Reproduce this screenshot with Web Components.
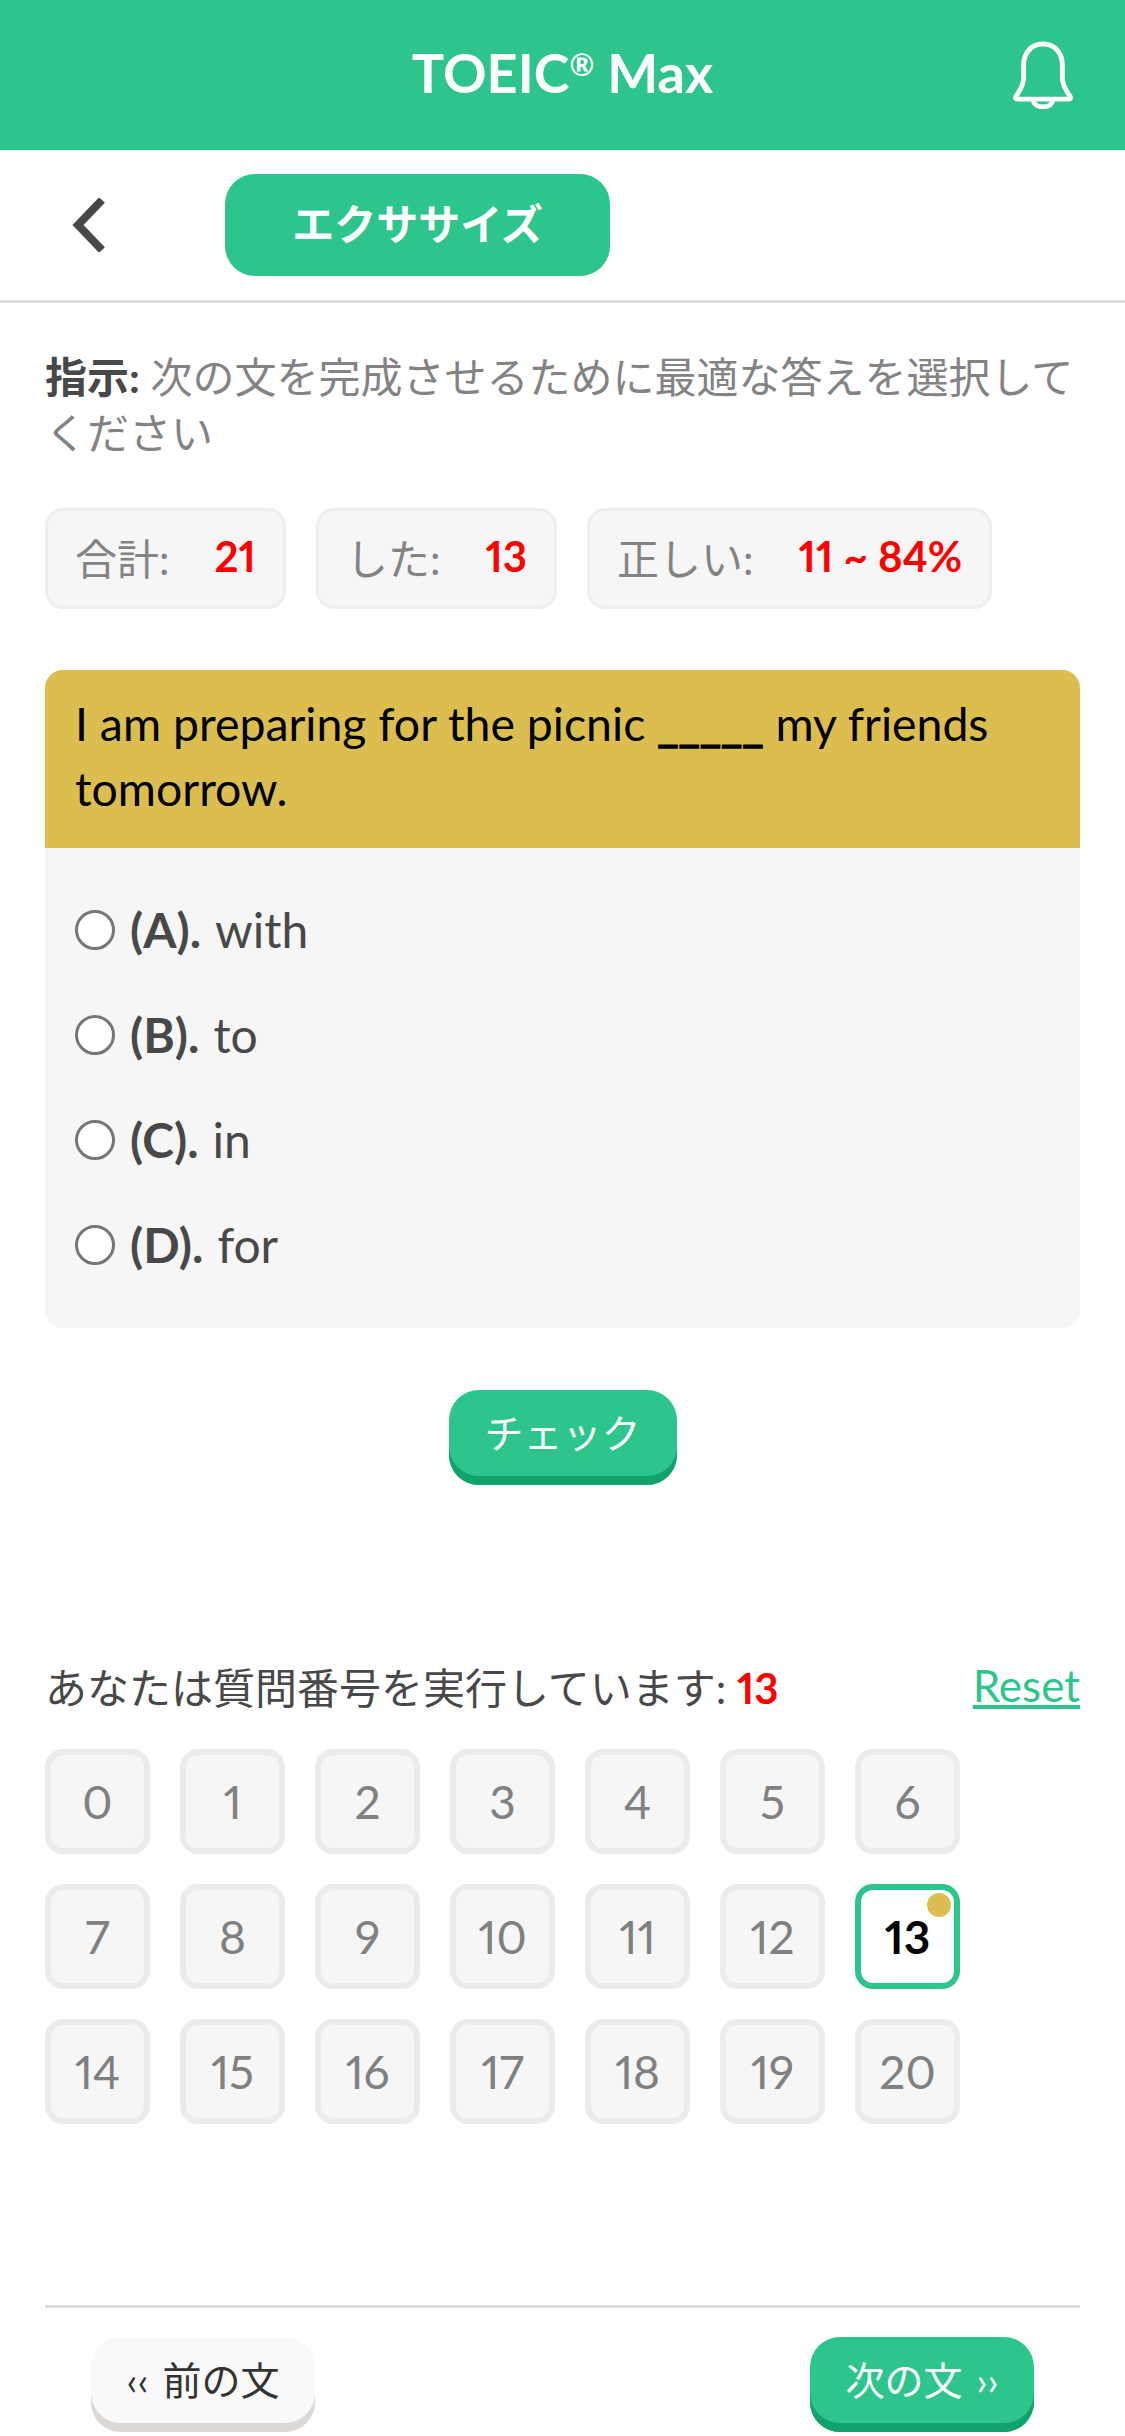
<!DOCTYPE html>
<html lang="ja">
<head>
<meta charset="utf-8">
<title>TOEIC Max</title>
<style>
  html, body {
    margin: 0;
    background: #fff;
  }
  body {
    width: 1125px;
    height: 2436px;
    overflow: hidden;
    font-family: Lato, "Noto Sans CJK JP", sans-serif;
    color: #484848;
  }
  exercise-page {
    height: 100%;
  }
</style>
</head>
<body>
<exercise-page></exercise-page>

<script>
const GREEN = "#2dc58b";
const FONT = 'Lato, "Noto Sans CJK JP", sans-serif';

class AppHeader extends HTMLElement {
  constructor() {
    super();
    this.attachShadow({ mode: "open" }).innerHTML = `
      <style>
        :host {
          display: flex;
          align-items: center;
          justify-content: center;
          position: relative;
          height: 150px;
          background: ${GREEN};
          color: #fff;
        }
        h1 {
          margin: 0 0 4px;
          font-size: 54px;
          font-weight: 700;
          line-height: 1;
        }
        sup {
          font-size: 30px;
          line-height: 0;
          vertical-align: 17px;
        }
        svg {
          position: absolute;
          left: 1013px;
          top: 41px;
          width: 60px;
          height: 68px;
        }
      </style>
      <h1>TOEIC<sup>®</sup> Max</h1>
      <svg viewBox="0 0 62 70" fill="none" stroke="#fff" stroke-width="5" stroke-linejoin="round">
        <path d="M31 3C18 3 11 13 11 25V38C11 45 8 50 3 57C2 59 3 60 5 60H57C59 60 60 59 59 57C54 50 51 45 51 38V25C51 13 44 3 31 3Z"/>
        <path d="M21 60C21 65 25 68 31 68C37 68 41 65 41 60"/>
      </svg>
    `;
  }
}

class SubNav extends HTMLElement {
  constructor() {
    super();
    this.attachShadow({ mode: "open" }).innerHTML = `
      <style>
        :host {
          display: flex;
          align-items: center;
          height: 150px;
          border-bottom: 3px solid #dcdcdc;
        }
        svg {
          width: 34px;
          height: 54px;
          margin-left: 72px;
          flex: none;
        }
        .tab {
          display: flex;
          align-items: center;
          justify-content: center;
          width: 385px;
          height: 102px;
          box-sizing: border-box;
          padding-bottom: 7px;
          margin-left: 119px;
          border-radius: 30px;
          background: ${GREEN};
          color: #fff;
          font-size: 42px;
          font-weight: 700;
        }
      </style>
      <svg viewBox="0 0 34 54" fill="none" stroke="#484848" stroke-width="8" stroke-linejoin="miter">
        <path d="M30 2L6 27L30 52"/>
      </svg>
      <div class="tab"><slot></slot></div>
    `;
  }
}

class StatPill extends HTMLElement {
  constructor() {
    super();
    this.attachShadow({ mode: "open" }).innerHTML = `
      <style>
        :host {
          display: flex;
          align-items: center;
          gap: 45px;
          height: 101px;
          box-sizing: border-box;
          padding: 0 27px 5px;
          border: 3px solid #eee;
          border-radius: 18px;
          background: #f6f6f6;
          color: #838383;
          font-size: 42px;
          font-variant-numeric: proportional-nums;
        }
        b {
          color: #f00;
        }
      </style>
      <span><slot></slot></span>
      <b>${this.getAttribute("value")}</b>
    `;
  }
}

class OptionRow extends HTMLElement {
  constructor() {
    super();
    this.attachShadow({ mode: "open" }).innerHTML = `
      <style>
        :host {
          display: flex;
          align-items: center;
          height: 105px;
          font-size: 48px;
          color: #484848;
        }
        i {
          flex: none;
          width: 40px;
          height: 40px;
          box-sizing: border-box;
          margin-right: 15px;
          border: 3px solid #767676;
          border-radius: 50%;
          background: #fff;
        }
        b {
          margin-right: 14px;
        }
      </style>
      <i></i><b>(${this.getAttribute("letter")}).</b><span><slot></slot></span>
    `;
  }
}

class QuestionCard extends HTMLElement {
  constructor() {
    super();
    this.attachShadow({ mode: "open" }).innerHTML = `
      <style>
        :host {
          display: block;
          margin: 0 45px;
          border-radius: 18px;
          overflow: hidden;
          background: #f6f6f6;
        }
        .prompt {
          height: 178px;
          box-sizing: border-box;
          padding: 21px 30px 0;
          background: #dbbe4f;
          color: #000;
          font-size: 46.4px;
          line-height: 65px;
        }
        .options {
          padding: 29px 30px 0;
          height: 480px;
          box-sizing: border-box;
        }
      </style>
      <div class="prompt"><slot name="prompt"></slot></div>
      <div class="options"><slot></slot></div>
    `;
  }
}

class PressButton extends HTMLElement {
  constructor() {
    super();
    this.attachShadow({ mode: "open" }).innerHTML = `
      <style>
        :host {
          display: inline-flex;
          align-items: center;
          justify-content: center;
          box-sizing: border-box;
          height: 95px;
          padding-bottom: 13px;
          border-radius: 30px;
          font-size: 39px;
          word-spacing: 4px;
          background: ${GREEN};
          color: #fff;
          box-shadow: inset 0 -9px 0 #12a26b;
        }
        :host([plain]) {
          background: #f9f9f9;
          color: #333;
          box-shadow: inset 0 -9px 0 #dbd8d6;
        }
      </style>
      <slot></slot>
    `;
  }
}

class NumberCell extends HTMLElement {
  constructor() {
    super();
    this.attachShadow({ mode: "open" }).innerHTML = `
      <style>
        :host {
          display: flex;
          align-items: center;
          justify-content: center;
          position: relative;
          width: 105px;
          height: 105px;
          box-sizing: border-box;
          border: 6px solid #ebebeb;
          border-radius: 18px;
          background: #f6f6f6;
          color: #808080;
          font-size: 46px;
          font-variant-numeric: proportional-nums;
        }
        :host([current]) {
          border-color: ${GREEN};
          background: #fff;
          color: #000;
          font-weight: 700;
        }
        :host([current])::after {
          content: "";
          position: absolute;
          top: 3px;
          right: 3px;
          width: 24px;
          height: 24px;
          border-radius: 50%;
          background: #dbbe4f;
        }
      </style>
      <slot></slot>
    `;
  }
}

class NumberGrid extends HTMLElement {
  constructor() {
    super();
    const root = this.attachShadow({ mode: "open" });
    root.innerHTML = `
      <style>
        :host {
          display: grid;
          grid-template-columns: repeat(7, 105px);
          column-gap: 30px;
          row-gap: 30px;
          margin: 0 45px;
        }
      </style>
    `;
    const current = Number(this.getAttribute("current"));
    for (let i = 0; i < Number(this.getAttribute("count")); i++) {
      const cell = document.createElement("number-cell");
      cell.textContent = i;
      if (i === current) cell.setAttribute("current", "");
      root.appendChild(cell);
    }
  }
}

class ExercisePage extends HTMLElement {
  constructor() {
    super();
    this.attachShadow({ mode: "open" }).innerHTML = `
      <style>
        :host {
          display: block;
          font-family: ${FONT};
        }
        .instruction {
          margin: 46px 45px 0;
          height: 112px;
          font-size: 42px;
          line-height: 56px;
          color: #838383;
        }
        .instruction b {
          color: #484848;
        }
        .stats {
          display: flex;
          gap: 30px;
          margin: 47px 45px 61px;
        }
        .blank {
          -webkit-text-stroke: 1.5px #000;
        }
        .check {
          display: flex;
          justify-content: center;
          margin-top: 62px;
        }
        .check press-button {
          width: 228px;
        }
        .progress {
          display: flex;
          align-items: center;
          justify-content: space-between;
          margin: 165px 45px 29px;
          height: 70px;
          font-size: 42px;
          color: #484848;
        }
        .progress b {
          color: #f00;
          font-variant-numeric: proportional-nums;
        }
        .progress a {
          color: ${GREEN};
          font-size: 44px;
          text-decoration: underline;
        }
        .footer {
          display: flex;
          justify-content: space-between;
          margin: 181px 45px 0;
          padding: 29px 46px 0;
          border-top: 3px solid #dcdcdc;
        }
        .footer press-button {
          width: 224px;
        }
      </style>
      <app-header></app-header>
      <sub-nav>エクササイズ</sub-nav>
      <div class="instruction"><b>指示:</b> <span>次の文を完成させるために最適な答えを選択して</span><br><span>ください</span></div>
      <div class="stats">
        <stat-pill value="21">合計:</stat-pill>
        <stat-pill value="13">した:</stat-pill>
        <stat-pill value="11 ~ 84%">正しい:</stat-pill>
      </div>
      <question-card>
        <span slot="prompt">I am preparing for the picnic <span class="blank">_____</span> my friends<br>tomorrow.</span>
        <option-row letter="A">with</option-row>
        <option-row letter="B">to</option-row>
        <option-row letter="C">in</option-row>
        <option-row letter="D">for</option-row>
      </question-card>
      <div class="check"><press-button>チェック</press-button></div>
      <div class="progress">
        <span>あなたは質問番号を実行しています: <b>13</b></span>
        <a>Reset</a>
      </div>
      <number-grid count="21" current="13"></number-grid>
      <div class="footer">
        <press-button plain>‹‹ 前の文</press-button>
        <press-button>次の文 ››</press-button>
      </div>
    `;
  }
}

customElements.define("app-header", AppHeader);
customElements.define("sub-nav", SubNav);
customElements.define("stat-pill", StatPill);
customElements.define("option-row", OptionRow);
customElements.define("question-card", QuestionCard);
customElements.define("press-button", PressButton);
customElements.define("number-cell", NumberCell);
customElements.define("number-grid", NumberGrid);
customElements.define("exercise-page", ExercisePage);
</script>
</body>
</html>
